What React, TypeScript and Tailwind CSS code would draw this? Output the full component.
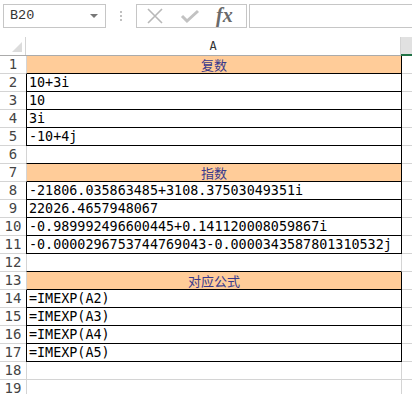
const cellFont = { fontFamily: '"DejaVu Sans Mono", "Noto Sans CJK SC", monospace' };

type Row = {
  n: number;
  text?: string;
  head?: boolean;
  bottom: boolean;
  left: boolean;
  right: boolean;
};

const rows: Row[] = [
  { n: 1, text: "复数", head: true, bottom: true, left: false, right: true },
  { n: 2, text: "10+3i", bottom: true, left: true, right: true },
  { n: 3, text: "10", bottom: true, left: true, right: true },
  { n: 4, text: "3i", bottom: true, left: true, right: true },
  { n: 5, text: "-10+4j", bottom: true, left: true, right: true },
  { n: 6, bottom: true, left: false, right: true },
  { n: 7, text: "指数", head: true, bottom: true, left: false, right: true },
  { n: 8, text: "-21806.035863485+3108.37503049351i", bottom: true, left: true, right: true },
  { n: 9, text: "22026.4657948067", bottom: true, left: true, right: true },
  { n: 10, text: "-0.989992496600445+0.141120008059867i", bottom: true, left: true, right: true },
  { n: 11, text: "-0.0000296753744769043-0.0000343587801310532j", bottom: true, left: true, right: true },
  { n: 12, bottom: true, left: false, right: false },
  { n: 13, text: "对应公式", head: true, bottom: true, left: false, right: true },
  { n: 14, text: "=IMEXP(A2)", bottom: true, left: true, right: true },
  { n: 15, text: "=IMEXP(A3)", bottom: true, left: true, right: true },
  { n: 16, text: "=IMEXP(A4)", bottom: true, left: true, right: true },
  { n: 17, text: "=IMEXP(A5)", bottom: true, left: true, right: true },
  { n: 18, bottom: false, left: false, right: false },
  { n: 19, bottom: false, left: false, right: false },
];

const Toolbar = () => (
  <div className="flex items-center h-[37px] pt-[4px] pb-[9px] pl-[3px]">
    <div className="flex items-center justify-between w-[103px] h-[24px] border border-[#c6c6c6] pl-[6px] pr-[7px]">
      <span className="text-[13.5px] text-[#333]" style={{ fontFamily: '"Liberation Mono", monospace' }}>B20</span>
      <span className="w-0 h-0 border-l-[4px] border-r-[4px] border-t-[4px] border-l-transparent border-r-transparent border-t-[#777]" />
    </div>
    <div className="flex flex-col gap-[2px] items-center w-[30px]">
      <span className="w-[2px] h-[2px] bg-[#c0c0c0]" />
      <span className="w-[2px] h-[2px] bg-[#c0c0c0]" />
      <span className="w-[2px] h-[2px] bg-[#c0c0c0]" />
    </div>
    <div className="flex items-center w-[111px] h-[24px] border border-[#c6c6c6] pl-[9px] gap-[16px]">
      <svg width="18" height="16" viewBox="0 0 18 16">
        <path d="M2 1 L16 15 M16 1 L2 15" stroke="#b8b8b8" strokeWidth="1.6" fill="none" />
      </svg>
      <svg width="20" height="16" viewBox="0 0 20 16">
        <path d="M2 8 L7 13 L18 3" stroke="#c2c2c2" strokeWidth="3" fill="none" />
      </svg>
      <span className="italic font-bold text-[20px] leading-none text-[#6a6a6a] -mt-[2px]" style={{ fontFamily: '"Liberation Serif", serif' }}>fx</span>
    </div>
    <div className="flex-1 h-[24px] border border-[#c6c6c6] ml-[2px] border-r-0" />
  </div>
);

const App = () => {
  return (
    <div className="w-[412px] h-[394px] overflow-hidden bg-white">
      <Toolbar />
      <div className="flex h-[19px] border-b border-[#ababab]">
        <div className="w-[26px] flex items-end justify-end pr-[3px] pb-[3px] border-r border-[#d4d4d4]">
          <svg width="10" height="10" viewBox="0 0 10 10">
            <polygon points="10,0 10,10 0,10" fill="#dcdcdc" />
          </svg>
        </div>
        <div className="w-[375px] flex items-center justify-center text-[12px] text-[#333] border-r border-[#d4d4d4]" style={cellFont}>A</div>
        <div className="flex-1 bg-[#e1e1e1] relative">
          <span className="absolute left-0 right-0 bottom-[-1px] h-[2px] bg-[#217346]" />
        </div>
      </div>
      {rows.map((r) => (
        <div key={r.n} className="flex h-[18px]">
          <div className="w-[26px] flex items-end justify-center text-[14px] leading-[17px] text-[#444] border-b border-[#d4d4d4]" style={cellFont}>
            {r.n}
          </div>
          <div
            className={`w-[376px] flex items-end border-l border-r border-b text-[13.4px] leading-[17px] whitespace-nowrap overflow-hidden ${
              r.head ? "bg-[#ffcc99] justify-center text-[#3a3a8c]" : "pl-[2px] text-black"
            } ${r.left ? "border-l-black" : "border-l-[#d4d4d4]"} ${r.right ? "border-r-black" : "border-r-[#d4d4d4]"} ${
              r.bottom ? "border-b-black" : "border-b-[#d4d4d4]"
            }`}
            style={cellFont}
          >
            {r.head ? <span className="text-[13px]" style={{ fontFamily: '"Noto Sans CJK SC", sans-serif' }}>{r.text}</span> : r.text}
          </div>
          <div className="flex-1 border-b border-[#d4d4d4]" />
        </div>
      ))}
    </div>
  );
};

export default App;
